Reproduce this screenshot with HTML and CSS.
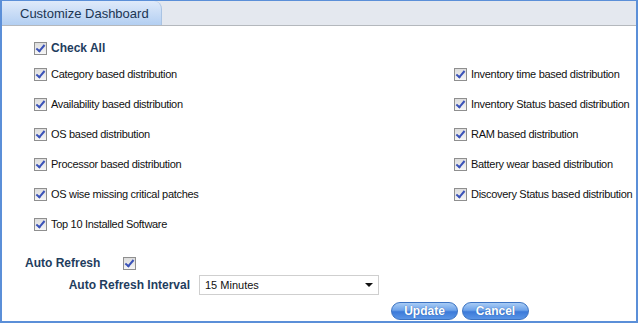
FILE: index.html
```html
<!DOCTYPE html>
<html>
<head>
<meta charset="utf-8">
<link rel="stylesheet" href="styles.css">
</head>
<body>
<div class="panel">
  <div class="header">
    <div class="tab">Customize Dashboard</div>
  </div>
  <div class="content">
    <label class="item checkall"><span class="cb"></span>Check All</label>
    <div class="grid">
      <div class="col">
        <label class="item"><span class="cb"></span>Category based distribution</label>
        <label class="item"><span class="cb"></span>Availability based distribution</label>
        <label class="item"><span class="cb"></span>OS based distribution</label>
        <label class="item"><span class="cb"></span>Processor based distribution</label>
        <label class="item"><span class="cb"></span>OS wise missing critical patches</label>
        <label class="item"><span class="cb"></span>Top 10 Installed Software</label>
      </div>
      <div class="col right">
        <label class="item"><span class="cb"></span>Inventory time based distribution</label>
        <label class="item"><span class="cb"></span>Inventory Status based distribution</label>
        <label class="item"><span class="cb"></span>RAM based distribution</label>
        <label class="item"><span class="cb"></span>Battery wear based distribution</label>
        <label class="item"><span class="cb"></span>Discovery Status based distribution</label>
      </div>
    </div>
    <div class="refresh">
      <span class="lbl">Auto Refresh</span><span class="cb"></span>
    </div>
    <div class="interval">
      <span class="lbl ilbl">Auto Refresh Interval</span>
      <div class="select"><span>15 Minutes</span><span class="arrow"></span></div>
    </div>
    <div class="buttons">
      <button class="btn">Update</button>
      <button class="btn">Cancel</button>
    </div>
  </div>
</div>
</body>
</html>
```
FILE: styles.css
```css
html, body { margin: 0; padding: 0; background: #fff; }
body { font-family: "Liberation Sans", Arial, sans-serif; font-size: 11px; color: #000; }
.panel {
  width: 634px; height: 320px;
  border: 2px solid #5b8fd8;
  border-top-width: 1px;
  display: flex; flex-direction: column;
  overflow: hidden;
}
.header {
  height: 24px;
  background: #e4e8ef;
  border-bottom: 1px solid #b4b8bd;
  display: flex;
  flex: none;
}
.tab {
  white-space: nowrap;
  padding: 0 12px 0 18px;
  background: linear-gradient(#dfeafa, #b3cff2);
  border-top-right-radius: 8px;
  border-right: 1px solid #a9c3e3;
  font-size: 13px;
  color: #1b3553;
  line-height: 26px;
}
.content { padding: 14px 0 0 32px; flex: 1; }
.item { display: flex; align-items: center; height: 30px; color: #111; white-space: nowrap; letter-spacing: -0.3px; }
.cb {
  width: 11px; height: 11px;
  border: 1px solid #8f8f8f;
  background: linear-gradient(#dcdcdc, #f6f6f6);
  margin-right: 4px;
  position: relative;
  flex: none;
}
.cb::after {
  content: "";
  position: absolute;
  left: 3px; top: 0px;
  width: 3px; height: 7px;
  border: solid #3a52b8;
  border-width: 0 2px 2px 0;
  transform: rotate(40deg);
}
.checkall { height: 16px; font-weight: bold; font-size: 12px; color: #1f3d5e; margin-bottom: 3px; letter-spacing: 0; }
.grid { display: flex; }
.col { width: 420px; }
.col.right { width: 182px; }
.refresh { display: flex; align-items: center; margin-top: 16px; margin-left: -9px; height: 16px; }
.lbl { font-weight: bold; font-size: 12px; color: #1f3d5e; }
.refresh .lbl { width: 98px; }
.interval { display: flex; align-items: center; margin-top: 4px; height: 20px; }
.ilbl { width: 156px; text-align: right; padding-right: 9px; }
.select {
  width: 168px; height: 18px;
  border: 1px solid #cfcfcf;
  display: flex; align-items: center; justify-content: space-between;
  padding: 0 5px;
  color: #111;
}
.arrow {
  width: 0; height: 0;
  border-left: 4px solid transparent;
  border-right: 4px solid transparent;
  border-top: 4px solid #111;
}
.buttons { display: flex; gap: 4px; margin-left: 357px; margin-top: 7px; }
.btn {
  width: 67px; height: 18px;
  border: 1px solid #3c73c2;
  border-radius: 9px;
  background: linear-gradient(#a9ccf5 0%, #6ea3ea 45%, #3c7ad9 55%, #5a95e6 100%);
  color: #fff;
  font-family: "Liberation Sans", Arial, sans-serif;
  font-weight: bold;
  font-size: 12px;
  padding: 0;
  text-shadow: 0 0 1px #2a5aa0;
}
```
